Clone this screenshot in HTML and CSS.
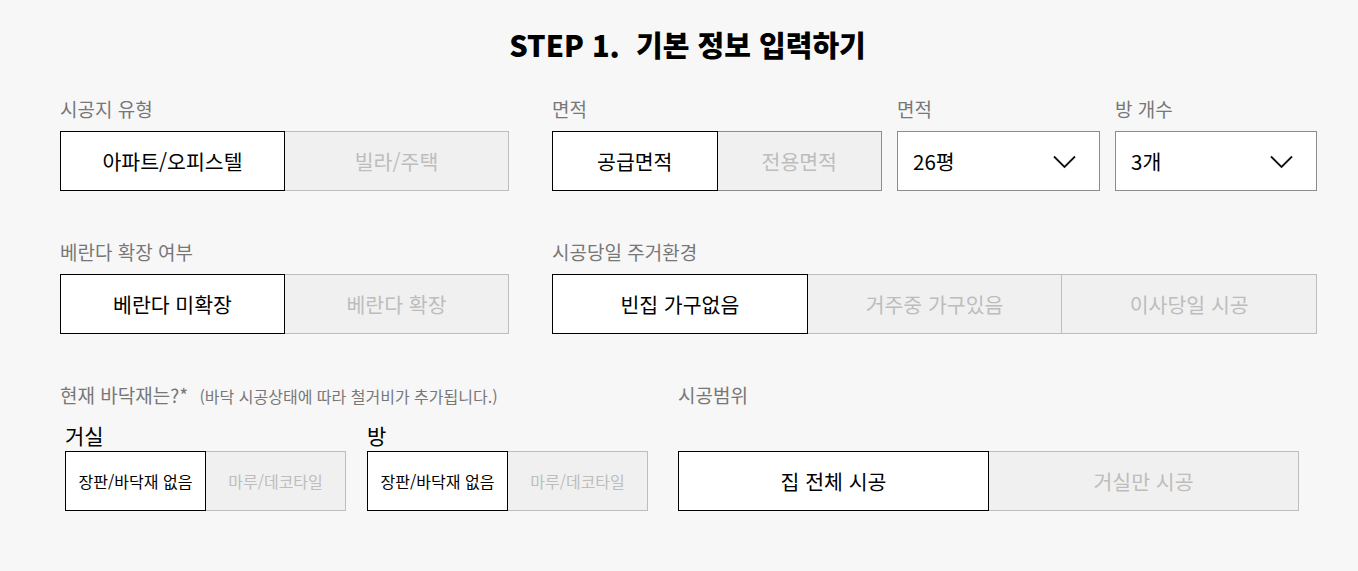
FILE: index.html
```html
<!DOCTYPE html>
<html lang="ko">
<head>
<meta charset="utf-8">
<title>STEP 1. 기본 정보 입력하기</title>
<link rel="stylesheet" href="styles.css">
</head>
<body>
<div class="page">
  <h1 class="title">STEP 1.&nbsp; 기본 정보 입력하기</h1>

  <div class="row row-1">
    <div class="group w-type">
      <div class="label">시공지 유형</div>
      <div class="seg">
        <div class="opt active">아파트/오피스텔</div>
        <div class="opt">빌라/주택</div>
      </div>
    </div>
    <div class="group w-area">
      <div class="label">면적</div>
      <div class="seg seg-dark">
        <div class="opt active">공급면적</div>
        <div class="opt">전용면적</div>
      </div>
    </div>
    <div class="group w-sel1">
      <div class="label">면적</div>
      <div class="select">
        <span>26평</span>
        <svg class="chev" width="23" height="14" viewBox="0 0 23 14"><path d="M1 1.5 L11.5 12 L22 1.5" fill="none" stroke="#111" stroke-width="1.8"/></svg>
      </div>
    </div>
    <div class="group w-sel2">
      <div class="label">방 개수</div>
      <div class="select">
        <span>3개</span>
        <svg class="chev" width="23" height="14" viewBox="0 0 23 14"><path d="M1 1.5 L11.5 12 L22 1.5" fill="none" stroke="#111" stroke-width="1.8"/></svg>
      </div>
    </div>
  </div>

  <div class="row row-2">
    <div class="group w-type">
      <div class="label">베란다 확장 여부</div>
      <div class="seg">
        <div class="opt active">베란다 미확장</div>
        <div class="opt">베란다 확장</div>
      </div>
    </div>
    <div class="group w-env">
      <div class="label">시공당일 주거환경</div>
      <div class="seg">
        <div class="opt active">빈집 가구없음</div>
        <div class="opt">거주중 가구있음</div>
        <div class="opt">이사당일 시공</div>
      </div>
    </div>
  </div>

  <div class="row row-3">
    <div class="group w-floor">
      <div class="label">현재 바닥재는?* <small class="note">(바닥 시공상태에 따라 철거비가 추가됩니다.)</small></div>
      <div class="rooms">
        <div class="room">
          <div class="room-name">거실</div>
          <div class="seg seg-small">
            <div class="opt active">장판/바닥재 없음</div>
            <div class="opt">마루/데코타일</div>
          </div>
        </div>
        <div class="room">
          <div class="room-name">방</div>
          <div class="seg seg-small">
            <div class="opt active">장판/바닥재 없음</div>
            <div class="opt">마루/데코타일</div>
          </div>
        </div>
      </div>
    </div>
    <div class="group w-scope">
      <div class="label">시공범위</div>
      <div class="room-spacer"></div>
      <div class="seg">
        <div class="opt active">집 전체 시공</div>
        <div class="opt">거실만 시공</div>
      </div>
    </div>
  </div>
</div>
</body>
</html>
```

FILE: styles.css
```css
html, body {
  margin: 0;
  padding: 0;
  background: #f7f7f7;
}
body {
  font-family: "Noto Sans CJK KR", "Noto Sans", sans-serif;
  color: #000;
}
.page {
  width: 1358px;
  padding: 24px 0 0 60px;
  box-sizing: border-box;
}
.title {
  margin: 0 0 0 -60px;
  padding-left: 17px;
  text-align: center;
  font-size: 29px;
  line-height: 40px;
  font-weight: 900;
  letter-spacing: 0;
  color: #000;
}
.row {
  display: flex;
  align-items: flex-start;
}
.row-1 { margin-top: 32px; }
.row-2 { margin-top: 48px; }
.row-3 { margin-top: 48px; }

.group {
  display: flex;
  flex-direction: column;
}
.w-type { width: 449px; margin-right: 43px; }
.w-area { width: 330px; margin-right: 15px; }
.w-sel1 { width: 203px; margin-right: 15px; }
.w-sel2 { width: 202px; }
.w-env { width: 765px; }
.w-floor { width: 588px; margin-right: 30px; }
.w-scope { width: 621px; }

.label {
  font-size: 19px;
  line-height: 26px;
  color: #777;
  margin-bottom: 9px;
  white-space: nowrap;
}
.note {
  font-size: 16px;
  margin-left: 6px;
  color: #777;
}

.seg {
  display: flex;
  height: 60px;
}
.opt {
  flex: 1;
  display: flex;
  align-items: center;
  justify-content: center;
  box-sizing: border-box;
  border: 1px solid #bdbdbd;
  background: #f0f0f0;
  color: #bdbdbd;
  font-size: 20.5px;
  white-space: nowrap;
}
.opt + .opt { margin-left: -1px; }
.opt.active {
  border-color: #000;
  background: #fff;
  color: #000;
  position: relative;
  z-index: 1;
}
.seg-dark .opt { border-color: #8c8c8c; }
.seg-dark .opt.active { border-color: #000; }

.select {
  height: 60px;
  box-sizing: border-box;
  border: 1px solid #8c8c8c;
  background: #fff;
  display: flex;
  align-items: center;
  justify-content: space-between;
  padding: 0 23px 0 15px;
  font-size: 20.5px;
}
.chev { display: block; margin-top: 2px; }

.rooms {
  display: flex;
  gap: 21px;
  padding-left: 5px;
  margin-top: 3px;
}
.room {
  width: 281px;
  display: flex;
  flex-direction: column;
}
.room-name {
  font-size: 21px;
  line-height: 28px;
  margin-bottom: 2px;
}
.room-spacer { height: 34px; }
.seg-small .opt {
  font-size: 16px;
}
```
